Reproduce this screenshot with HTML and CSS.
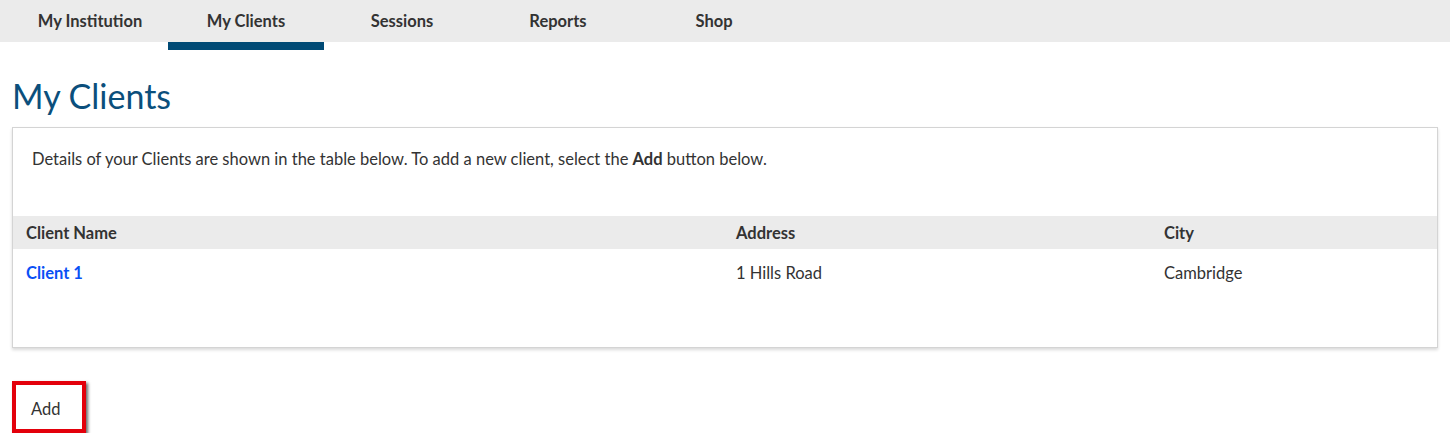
FILE: index.html
```html
<!DOCTYPE html>
<html lang="en">
<head>
<meta charset="UTF-8">
<title>My Clients</title>
<link rel="stylesheet" href="styles.css">
</head>
<body>
<nav class="topnav">
<a href="#">My Institution</a>
<a href="#" class="active">My Clients</a>
<a href="#">Sessions</a>
<a href="#">Reports</a>
<a href="#">Shop</a>
</nav>
<div class="page">
<h1>My Clients</h1>
<div class="panel">
<p class="intro">Details of your Clients are shown in the table below. To add a new client, select the <b>Add</b> button below.</p>
<table class="clients">
<thead>
<tr><th class="c-name">Client Name</th><th class="c-addr">Address</th><th>City</th></tr>
</thead>
<tbody>
<tr><td><a href="#">Client 1</a></td><td>1 Hills Road</td><td>Cambridge</td></tr>
</tbody>
</table>
</div>
<button class="add-btn">Add</button>
</div>
</body>
</html>
```
FILE: styles.css
```css
* {box-sizing: border-box;margin: 0;padding: 0;}
body {font-family: "Lato", "Open Sans", sans-serif;color: #333;background: #fff;font-size: 16.5px;}
.topnav {display: flex;background: #ebebeb;height: 42px;padding-left: 12px;}
.topnav a {width: 156px;height: 42px;line-height: 42px;text-align: center;font-weight: bold;font-size: 16.5px;color: #333;text-decoration: none;position: relative;}
.topnav a.active::after {content: "";position: absolute;left: 0;right: 0;top: 42px;height: 8px;background: #004a75;}
.page {padding: 0 12px;}
h1 {font-weight: normal;font-size: 34px;color: #0b4f7c;margin-top: 34px;line-height: 40px;height: 51px;}
.panel {border: 1px solid #d4d4d4;box-shadow: 0 2px 3px rgba(0,0,0,0.15);padding: 0 0 50px 0;}
.intro {padding: 21px 19px 0 19px;height: 88px;}
.clients {width: 100%;border-collapse: collapse;}
.clients th {background: #ebebeb;text-align: left;font-weight: bold;height: 33px;padding: 0 13px;}
.clients td {height: 48px;padding: 0 13px;}
.c-name {width: 710px;}
.c-addr {width: 428px;}
.clients a {color: #0a50f5;font-weight: bold;text-decoration: none;}
.add-btn {margin-top: 33px;width: 74px;height: 52px;border: 4px solid #e3000b;background: #fff;font-family: inherit;font-size: 16.5px;color: #333;box-shadow: 2px 2px 3px rgba(0,0,0,0.6);text-align: left;padding: 4px 0 0 15px;}
```
